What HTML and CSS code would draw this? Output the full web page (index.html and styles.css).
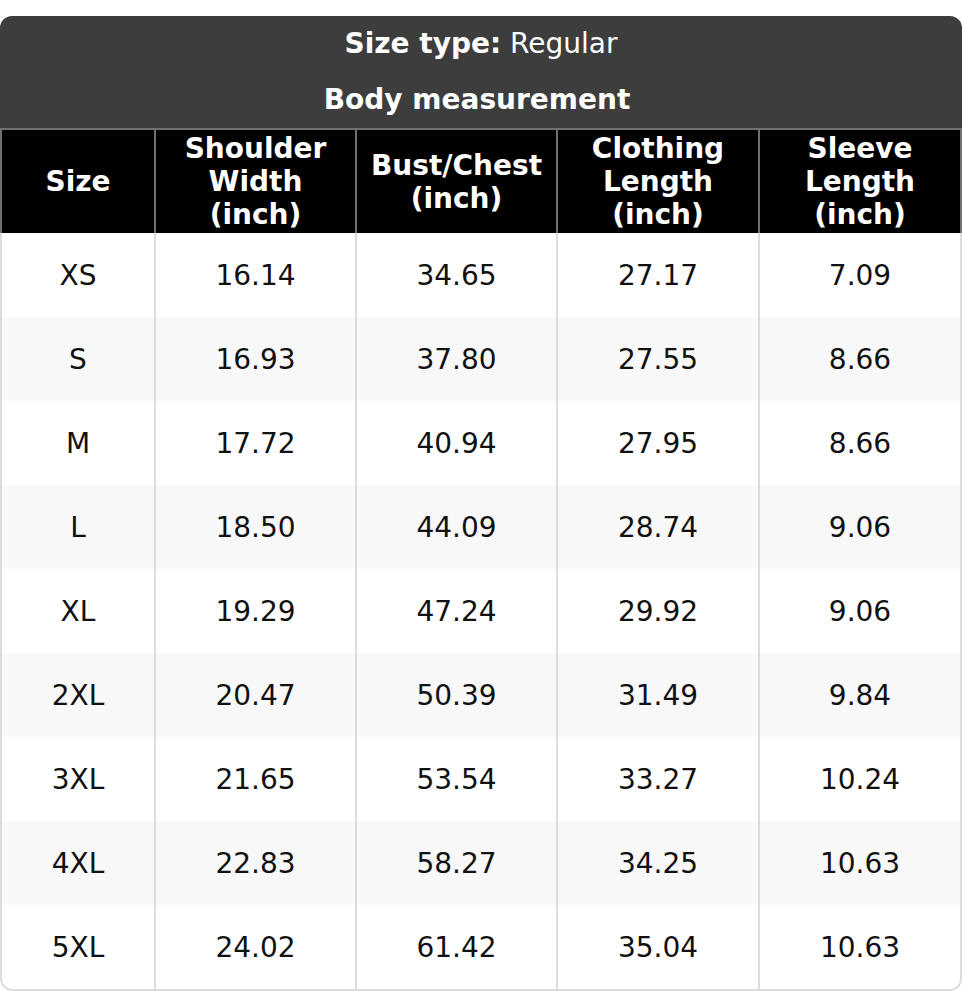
FILE: index.html
```html
<!DOCTYPE html>
<html>
<head>
<meta charset="utf-8">
<link rel="stylesheet" href="styles.css">
</head>
<body>
<div class="chart">
  <div class="title">
    <div class="title-line"><b>Size type:</b> Regular</div>
    <div class="title-line title-sub"><b>Body measurement</b></div>
  </div>
  <table class="sizes">
    <colgroup>
      <col class="c1"><col class="c2"><col class="c3"><col class="c4"><col class="c5">
    </colgroup>
    <thead>
      <tr>
        <th>Size</th>
        <th>Shoulder<br>Width<br>(inch)</th>
        <th>Bust/Chest<br>(inch)</th>
        <th>Clothing<br>Length<br>(inch)</th>
        <th>Sleeve<br>Length<br>(inch)</th>
      </tr>
    </thead>
    <tbody>
      <tr><td>XS</td><td>16.14</td><td>34.65</td><td>27.17</td><td>7.09</td></tr>
      <tr><td>S</td><td>16.93</td><td>37.80</td><td>27.55</td><td>8.66</td></tr>
      <tr><td>M</td><td>17.72</td><td>40.94</td><td>27.95</td><td>8.66</td></tr>
      <tr><td>L</td><td>18.50</td><td>44.09</td><td>28.74</td><td>9.06</td></tr>
      <tr><td>XL</td><td>19.29</td><td>47.24</td><td>29.92</td><td>9.06</td></tr>
      <tr><td>2XL</td><td>20.47</td><td>50.39</td><td>31.49</td><td>9.84</td></tr>
      <tr><td>3XL</td><td>21.65</td><td>53.54</td><td>33.27</td><td>10.24</td></tr>
      <tr><td>4XL</td><td>22.83</td><td>58.27</td><td>34.25</td><td>10.63</td></tr>
      <tr><td>5XL</td><td>24.02</td><td>61.42</td><td>35.04</td><td>10.63</td></tr>
    </tbody>
  </table>
</div>
</body>
</html>
```
FILE: styles.css
```css
html, body {
  margin: 0;
  padding: 0;
  background: #fff;
}
body {
  padding-top: 16px;
  font-family: "DejaVu Sans", sans-serif;
}
.chart {
  width: 962px;
  border-radius: 12px;
  overflow: hidden;
}
.title {
  background: #3d3d3d;
  color: #fff;
  text-align: center;
  font-size: 28px;
}
.title-line {
  height: 56px;
  line-height: 56px;
}
.title-sub {
  padding-right: 8px;
}
.sizes {
  width: 962px;
  table-layout: fixed;
  border-collapse: separate;
  border-spacing: 0;
}
.c1 { width: 156px; }
.c2 { width: 201px; }
.c3 { width: 201px; }
.c4 { width: 202px; }
.c5 { width: 202px; }
.sizes th {
  background: #000;
  color: #fff;
  font-weight: bold;
  font-size: 28px;
  line-height: 33px;
  height: 105px;
  padding: 0;
  border-top: 2px solid #707070;
  border-right: 2px solid #707070;
  box-sizing: border-box;
  vertical-align: middle;
}
.sizes th:first-child {
  border-left: 2px solid #707070;
}
.sizes td {
  height: 84px;
  padding: 0;
  text-align: center;
  vertical-align: middle;
  font-size: 28px;
  color: #111;
  border-right: 2px solid #dcdcdc;
}
.sizes td:first-child {
  border-left: 2px solid #dcdcdc;
}
.sizes tbody tr:nth-child(even) td {
  background: #f8f8f8;
}
.sizes tbody tr:last-child td {
  border-bottom: 2px solid #dcdcdc;
}
.sizes tbody tr:last-child td:first-child {
  border-bottom-left-radius: 12px;
}
.sizes tbody tr:last-child td:last-child {
  border-bottom-right-radius: 12px;
}
```
